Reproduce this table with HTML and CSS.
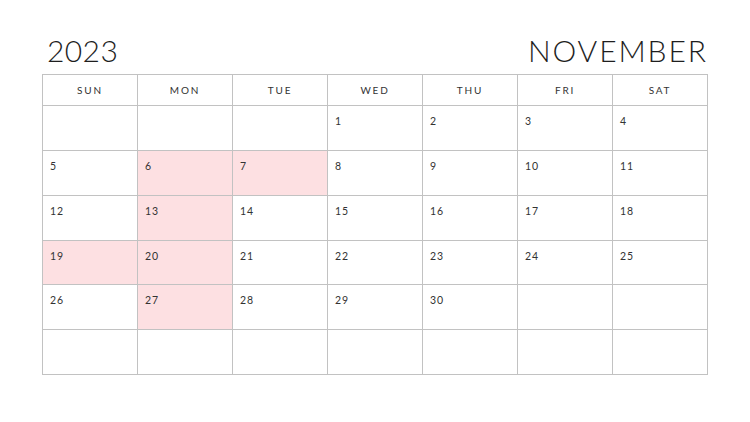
FILE: index.html
```html
<!DOCTYPE html>
<html>
<head>
<meta charset="utf-8">
<link rel="stylesheet" href="styles.css">
</head>
<body>
<div class="page">
  <div class="head">
    <div class="year">2023</div>
    <div class="month">NOVEMBER</div>
  </div>
  <div class="cal">
    <div class="dow">SUN</div><div class="dow">MON</div><div class="dow">TUE</div><div class="dow">WED</div><div class="dow">THU</div><div class="dow">FRI</div><div class="dow">SAT</div>
    <div class="day"></div><div class="day"></div><div class="day"></div><div class="day">1</div><div class="day">2</div><div class="day">3</div><div class="day">4</div>
    <div class="day">5</div><div class="day hl">6</div><div class="day hl">7</div><div class="day">8</div><div class="day">9</div><div class="day">10</div><div class="day">11</div>
    <div class="day">12</div><div class="day hl">13</div><div class="day">14</div><div class="day">15</div><div class="day">16</div><div class="day">17</div><div class="day">18</div>
    <div class="day hl">19</div><div class="day hl">20</div><div class="day">21</div><div class="day">22</div><div class="day">23</div><div class="day">24</div><div class="day">25</div>
    <div class="day">26</div><div class="day hl">27</div><div class="day">28</div><div class="day">29</div><div class="day">30</div><div class="day"></div><div class="day"></div>
    <div class="day"></div><div class="day"></div><div class="day"></div><div class="day"></div><div class="day"></div><div class="day"></div><div class="day"></div>
  </div>
</div>
</body>
</html>
```
FILE: styles.css
```css
html, body {
  margin: 0;
  padding: 0;
  background: #ffffff;
}
body {
  font-family: "Lato", "Open Sans", sans-serif;
  color: #2a2a2a;
}
.page {
  width: 667px;
  padding: 35px 0 0 42px;
}
.head {
  display: flex;
  justify-content: space-between;
  align-items: flex-start;
  height: 39px;
  padding: 0 3px 0 5px;
}
.year, .month {
  font-size: 30px;
  line-height: 30px;
  font-weight: 300;
  color: #1e1e1e;
}
.year {
  letter-spacing: 0.4px;
}
.month {
  letter-spacing: 1.9px;
  margin-right: -1.9px;
}
.cal {
  display: grid;
  grid-template-columns: repeat(7, 95px);
  grid-template-rows: 31px;
  grid-auto-rows: 44.85px;
  border-top: 1px solid #c2c2c2;
  border-left: 1px solid #c2c2c2;
  width: 665px;
}
.dow, .day {
  box-sizing: border-box;
  border-right: 1px solid #c2c2c2;
  border-bottom: 1px solid #c2c2c2;
}
.dow {
  display: flex;
  align-items: center;
  justify-content: center;
  font-size: 10px;
  letter-spacing: 1.8px;
  color: #333;
}
.day {
  padding: 9px 0 0 7px;
  font-size: 10.5px;
  letter-spacing: 0.9px;
  color: #333;
}
.hl {
  background: #fde0e2;
}
```
